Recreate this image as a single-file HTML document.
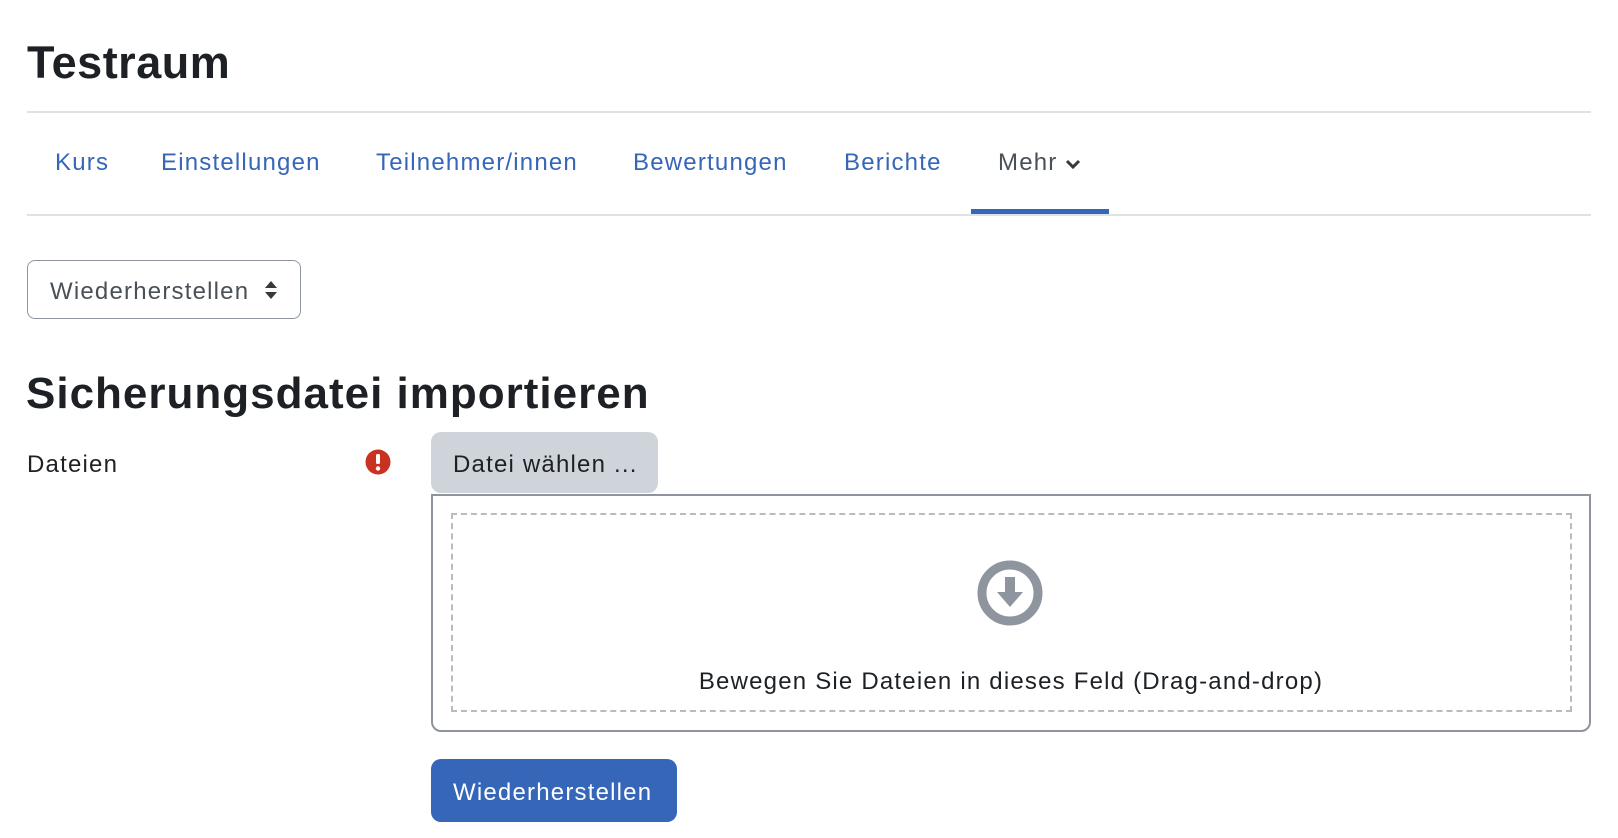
<!DOCTYPE html>
<html><head><meta charset="utf-8"><style>
body{margin:0;width:1618px;height:838px;background:#fff;font-family:"Liberation Sans",sans-serif;color:#1d2125;position:relative;overflow:hidden}
.a{position:absolute;white-space:nowrap}
.t{letter-spacing:1.2px}
.nav{font-size:24px;color:#3566b8;top:149px;letter-spacing:1.2px}
</style></head><body>
<div class="a" style="left:27px;top:37px;font-size:45px;font-weight:bold;letter-spacing:0.5px">Testraum</div>
<div class="a" style="left:27px;top:111px;width:1564px;height:2px;background:#dee2e6"></div>
<div class="a nav" style="left:55px">Kurs</div>
<div class="a nav" style="left:161px">Einstellungen</div>
<div class="a nav" style="left:376px">Teilnehmer/innen</div>
<div class="a nav" style="left:633px">Bewertungen</div>
<div class="a nav" style="left:844px">Berichte</div>
<div class="a nav" style="left:998px;color:#495057">Mehr <svg width="16" height="12" viewBox="0 0 16 12" style="vertical-align:middle"><path d="M2 3 L8 9 L14 3" stroke="#343a40" stroke-width="3" fill="none"/></svg></div>
<div class="a" style="left:27px;top:214px;width:1564px;height:2px;background:#dee2e6"></div>
<div class="a" style="left:971px;top:209px;width:138px;height:5px;background:#3566b8"></div>
<div class="a" style="left:27px;top:260px;width:274px;height:59px;border:1.5px solid #8f959e;border-radius:8px;box-sizing:border-box"></div>
<div class="a t" style="left:50px;top:278px;font-size:24px;color:#495057">Wiederherstellen</div>
<svg class="a" style="left:264px;top:280px" width="14" height="20" viewBox="0 0 14 20"><path d="M1 8 L7 1 L13 8Z M1 12 L7 19 L13 12Z" fill="#343a40"/></svg>
<div class="a" style="left:26px;top:369px;font-size:44px;font-weight:bold;letter-spacing:1px">Sicherungsdatei importieren</div>
<div class="a t" style="left:27px;top:451px;font-size:24px">Dateien</div>
<svg class="a" style="left:365px;top:449px" width="26" height="26" viewBox="0 0 26 26"><circle cx="13" cy="13" r="12.5" fill="#ca3120"/><rect x="11" y="5" width="4" height="10" rx="1.5" fill="#fff"/><circle cx="13" cy="19.5" r="2.2" fill="#fff"/></svg>
<div class="a" style="left:431px;top:432px;width:227px;height:61px;background:#ced4da;border-radius:10px"></div>
<div class="a t" style="left:453px;top:451px;font-size:24px">Datei wählen ...</div>
<div class="a" style="left:431px;top:494px;width:1160px;height:238px;border:2px solid #8f959e;border-radius:0 0 10px 10px;box-sizing:border-box"></div>
<div class="a" style="left:451px;top:513px;width:1121px;height:199px;border:2px dashed #bbb;box-sizing:border-box"></div>
<svg class="a" style="left:977px;top:560px" width="66" height="66" viewBox="0 0 66 66"><circle cx="33" cy="33" r="28" fill="none" stroke="#8f959e" stroke-width="9"/><path d="M28 17 H38 V32 H46 L33 47 L20 32 H28Z" fill="#8f959e"/></svg>
<div class="a t" style="left:0;width:2022px;top:668px;font-size:24px;text-align:center">Bewegen Sie Dateien in dieses Feld (Drag-and-drop)</div>
<div class="a" style="left:431px;top:759px;width:246px;height:63px;background:#3566b8;border-radius:10px"></div>
<div class="a t" style="left:453px;top:779px;font-size:24px;color:#fff">Wiederherstellen</div>
</body></html>
